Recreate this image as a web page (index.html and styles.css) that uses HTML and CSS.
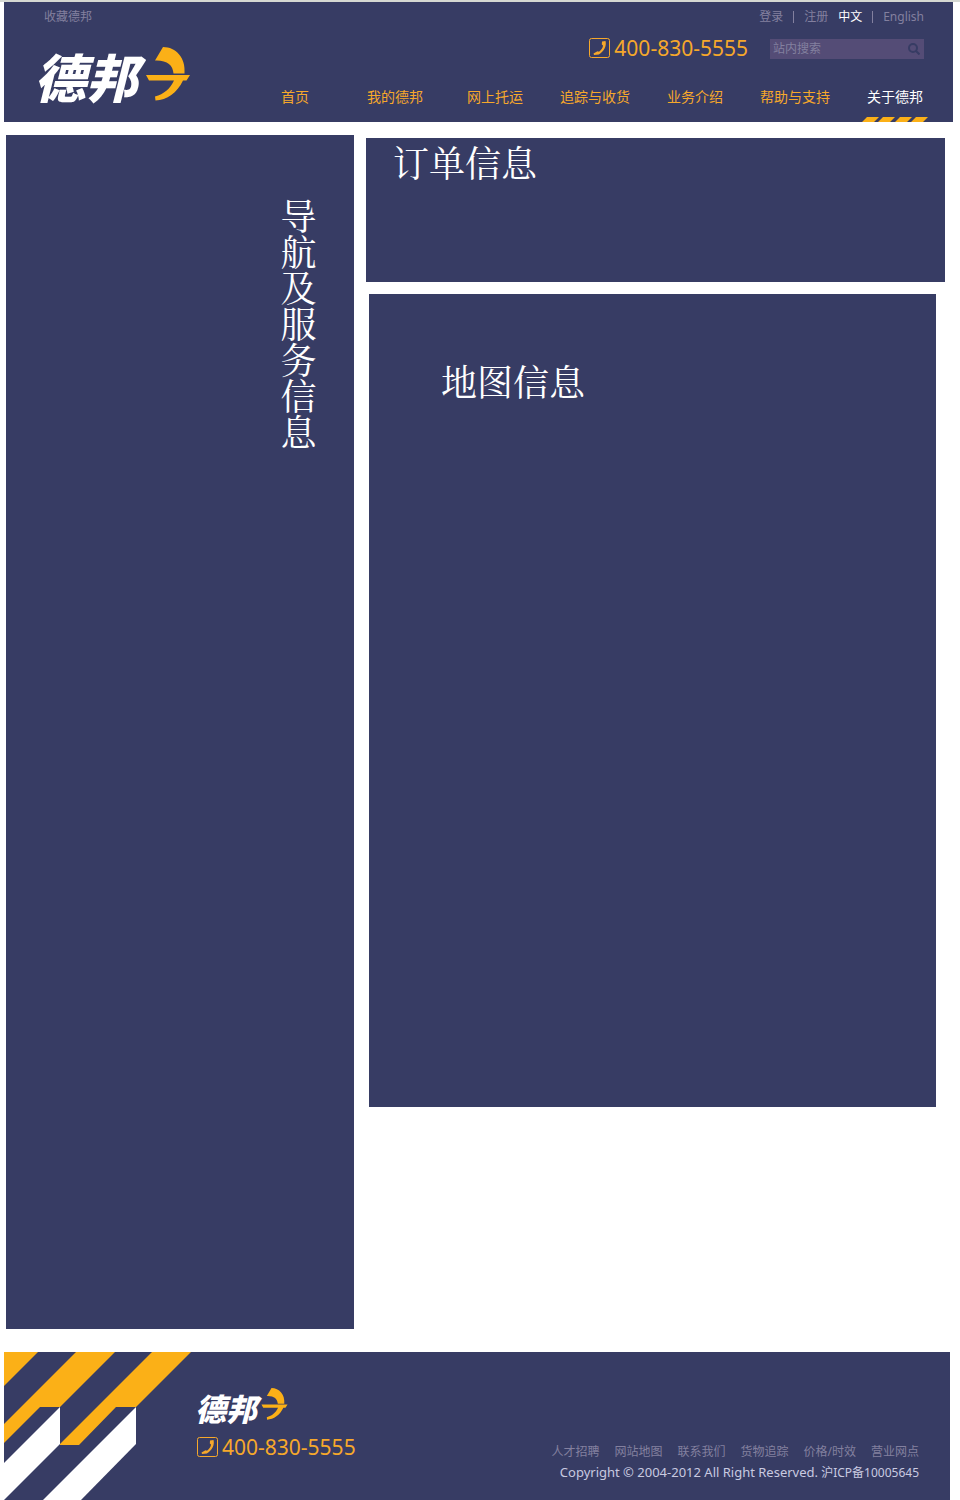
FILE: index.html
```html
<!DOCTYPE html>
<html lang="zh-CN">
<head>
<meta charset="utf-8">
<title>德邦</title>
<link rel="stylesheet" href="styles.css">
</head>
<body>
<svg class="defs" aria-hidden="true">
  <symbol id="wing" viewBox="0 0 44 54">
    <path d="M17 0C30 0 40 11 38.500 26.500H27.500C27 18 21 13 9 13.500Z"/>
    <path d="M0 28H44L40.500 33.500H37C31 46 21 53 9.500 53.500L9 49.500C18 47 24 42 28 33.500H3Z"/>
  </symbol>
  <symbol id="phone" viewBox="0 0 22 21">
    <rect x="0.500" y="0.500" width="20" height="19" rx="2" fill="none" stroke="currentColor"/>
    <path d="M13 3.500L16.500 3C17.800 8 15 13.500 9.800 16.500L5 17L4.500 15.500L8.500 13.200L10 13.700C12.500 12 13.800 10 14 7.600L12.800 6.500Z" fill="currentColor"/>
  </symbol>
</svg>
<header class="header">
  <div class="topbar">
    <a href="#">收藏德邦</a>
    <div class="account">
      <a href="#">登录</a><span class="bar"></span><a href="#">注册</a>
      <a class="on" href="#">中文</a><span class="bar"></span><a href="#">English</a>
    </div>
  </div>
  <div class="main-row">
    <a class="logo" href="#"><span>德邦</span><svg class="wing"><use href="#wing"/></svg></a>
    <div class="right">
      <div class="contact">
        <div class="tel"><svg class="phone"><use href="#phone"/></svg><span>400-830-5555</span></div>
        <form class="search">
          <input type="text" placeholder="站内搜索" aria-label="站内搜索">
          <button type="button" aria-label="搜索"><svg class="lens" viewBox="0 0 12 12"><circle cx="5" cy="5" r="4"/><path d="M8 8L11.500 11.500"/></svg></button>
        </form>
      </div>
      <nav class="nav">
        <a href="#">首页</a>
        <a href="#">我的德邦</a>
        <a href="#">网上托运</a>
        <a href="#">追踪与收货</a>
        <a href="#">业务介绍</a>
        <a href="#">帮助与支持</a>
        <a class="on" href="#">关于德邦<svg class="stripes" viewBox="0 0 66 5"><path d="M0 5L5 0H17L12 5ZM16 5L21 0H33L28 5ZM33 5L38 0H50L45 5ZM49 5L54 0H66L61 5Z"/></svg></a>
      </nav>
    </div>
  </div>
</header>
<main class="content">
  <aside class="panel side"><h2>导航及服务信息</h2></aside>
  <div class="column">
    <section class="panel order"><h2>订单信息</h2></section>
    <section class="panel map"><h2>地图信息</h2></section>
  </div>
</main>
<footer class="footer">
  <svg class="pattern" viewBox="0 0 187 148" aria-hidden="true">
    <g fill="#fbb017">
      <path d="M0 0H34L0 34Z"/>
      <path d="M72 0H111L56 55H36L0 91V72Z"/>
      <path d="M148 0H187L132 55H112L75 93H56V92Z"/>
    </g>
    <g fill="#fff">
      <path d="M56 55V92L0 148V111Z"/>
      <path d="M132 55V92L77 148H39Z"/>
    </g>
  </svg>
  <div class="foot-brand">
    <a class="logo small" href="#"><span>德邦</span><svg class="wing"><use href="#wing"/></svg></a>
    <div class="tel"><svg class="phone"><use href="#phone"/></svg><span>400-830-5555</span></div>
  </div>
  <div class="foot-info">
    <nav class="foot-links">
      <a href="#">人才招聘</a><a href="#">网站地图</a><a href="#">联系我们</a><a href="#">货物追踪</a><a href="#">价格/时效</a><a href="#">营业网点</a>
    </nav>
    <p><span class="copy">Copyright © 2004-2012 All Right Reserved.</span> 沪ICP备10005645</p>
  </div>
</footer>
</body>
</html>
```
FILE: styles.css
```css
* { box-sizing: border-box; }
body {
  margin: 0;
  background: #fff;
  border-top: 2px solid #d5d8d2;
  font: 12px/20px "Noto Sans", "Noto Sans CJK SC", sans-serif;
  color: #83809f;
}
a { color: inherit; text-decoration: none; }
h2, p { margin: 0; }
svg { display: block; flex: none; }
.defs { position: absolute; width: 0; height: 0; }

.header {
  margin: 0 7px 0 4px;
  background: #373c64;
  min-height: 120px;
}
.topbar {
  display: flex;
  justify-content: space-between;
  padding: 5px 29px 0 40px;
}
.account { display: flex; align-items: center; gap: 10px; }
.bar { width: 1px; height: 12px; background: #83809f; }
.account .on { color: #fff; }

.main-row {
  display: flex;
  justify-content: space-between;
  padding: 10px 8px 0 30px;
}
.logo {
  display: flex;
  align-items: flex-start;
  color: #fff;
  font: italic 900 52px/54px "Noto Sans CJK SC", sans-serif;
}
.logo span { padding-top: 12px; }
.wing { width: 44px; height: 54px; margin: 10px 0 0 8px; fill: #fbb017; }
.logo.small { font-size: 31px; line-height: 32px; }
.small span { padding-top: 4px; }
.small .wing { width: 27px; height: 32px; margin: 0 0 0 4px; }

.right { flex: 0 1 700px; }
.contact {
  display: flex;
  justify-content: flex-end;
  align-items: center;
  gap: 22px;
  padding: 0 21px 0 0;
  height: 22px;
}
.tel {
  display: flex;
  align-items: center;
  gap: 3px;
  color: #f6a82b;
  font-size: 21px;
  line-height: 22px;
}
.phone { width: 22px; height: 21px; }
.search {
  display: flex;
  align-items: center;
  width: 154px;
  height: 20px;
  margin-top: 2px;
  background: #544c76;
}
.search input {
  flex: 1;
  min-width: 0;
  padding: 0 3px;
  border: 0;
  background: none;
  color: #83809f;
  font: inherit;
}
.search input::placeholder { color: #83809f; opacity: 1; }
.search button { padding: 0 4px; border: 0; background: none; }
.lens { width: 12px; height: 12px; fill: none; stroke: #373c64; stroke-width: 2; }

.nav {
  display: grid;
  grid-template-columns: repeat(7, 1fr);
  margin-top: 26px;
  color: #f6a82b;
  font-size: 14px;
  line-height: 24px;
}
.nav a {
  display: flex;
  flex-direction: column;
  justify-content: space-between;
  align-items: center;
  height: 37px;
}
.nav .on { color: #fff; }
.stripes { width: 66px; height: 5px; fill: #fbb017; }

.content {
  display: grid;
  grid-template-columns: 348fr 579fr;
  gap: 12px;
  padding: 13px 15px 23px 6px;
}
.panel { background: #373c64; color: #fff; }
.panel h2 {
  font: 400 36px/36px "Noto Serif CJK SC", "Noto Sans CJK SC", serif;
}
.side {
  display: flex;
  justify-content: flex-end;
  min-height: 1194px;
  padding: 63px 38px 0 0;
}
.side h2 { writing-mode: vertical-rl; }
.column { padding-top: 3px; }
.order { min-height: 144px; padding: 6px 27px; }
.map { min-height: 813px; margin: 12px 9px 0 3px; padding: 69px 72px; }

.footer {
  display: flex;
  margin: 0 10px 0 4px;
  min-height: 148px;
  background: #373c64;
}
.pattern { width: 187px; height: 148px; }
.foot-brand { padding: 36px 0 0 4px; }
.foot-brand .tel { margin: 12px 0 0 2px; }
.foot-info {
  margin-left: auto;
  padding: 90px 31px 0 0;
  text-align: right;
}
.foot-links { display: flex; justify-content: flex-end; gap: 15px; }
.foot-info p { color: #c9cae0; }
.copy { font-size: 13px; }
```
